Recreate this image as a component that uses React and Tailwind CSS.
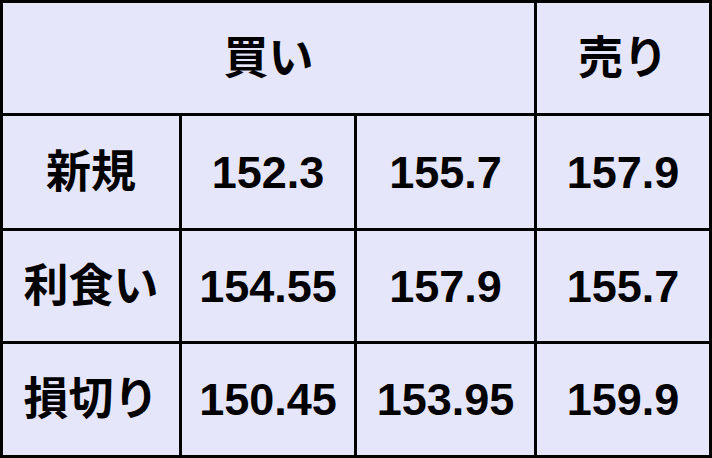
import React from 'react';

const rows = [
  { label: '新規', values: ['152.3', '155.7', '157.9'] },
  { label: '利食い', values: ['154.55', '157.9', '155.7'] },
  { label: '損切り', values: ['150.45', '153.95', '159.9'] },
];

const cell = 'flex items-center justify-center bg-[#e6e6fa] text-black font-bold text-[45px] leading-none';

export default function App() {
  return (
    <div className="w-[712px] h-[458px] bg-[#e6e6fa] font-['Liberation_Sans','Noto_Sans_CJK_JP',sans-serif]">
      <div className="grid h-full grid-cols-[176px_172px_177px_172px] grid-rows-[110px_112px_110px_111px] gap-[3px] bg-black p-[3px]">
        <div className={`${cell} col-span-3`}>買い</div>
        <div className={cell}>売り</div>
        {rows.map((row) => (
          <React.Fragment key={row.label}>
            <div className={cell}>{row.label}</div>
            {row.values.map((v, i) => (
              <div key={i} className={cell}>{v}</div>
            ))}
          </React.Fragment>
        ))}
      </div>
    </div>
  );
}
